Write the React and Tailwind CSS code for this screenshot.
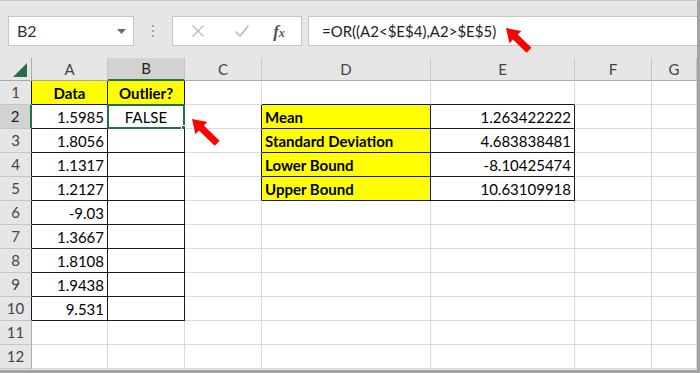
import React from 'react';

const colWidths = 'grid-cols-[32px_76px_77px_77px_169px_144px_77px_45px]';
const letters = ['A', 'B', 'C', 'D', 'E', 'F', 'G'];

// valores da planilha: [linha][coluna]
const cells = {
  '1-1': { v: 'Data', bold: true, align: 'center', yellow: true },
  '1-2': { v: 'Outlier?', bold: true, align: 'center', yellow: true },
  '2-1': { v: '1.5985' },
  '3-1': { v: '1.8056' },
  '4-1': { v: '1.1317' },
  '5-1': { v: '1.2127' },
  '6-1': { v: '-9.03' },
  '7-1': { v: '1.3667' },
  '8-1': { v: '1.8108' },
  '9-1': { v: '1.9438' },
  '10-1': { v: '9.531' },
  '2-2': { v: 'FALSE', align: 'center' },
  '2-4': { v: 'Mean', bold: true, align: 'left', yellow: true },
  '3-4': { v: 'Standard Deviation', bold: true, align: 'left', yellow: true },
  '4-4': { v: 'Lower Bound', bold: true, align: 'left', yellow: true },
  '5-4': { v: 'Upper Bound', bold: true, align: 'left', yellow: true },
  '2-5': { v: '1.263422222' },
  '3-5': { v: '4.683838481' },
  '4-5': { v: '-8.10425474' },
  '5-5': { v: '10.63109918' },
};

const bordered = (r, c) =>
  (r >= 1 && r <= 10 && c >= 1 && c <= 2) || (r >= 2 && r <= 5 && c >= 4 && c <= 5);

function Cell({ r, c }) {
  const cell = cells[`${r}-${c}`];
  const right = bordered(r, c) || bordered(r, c + 1) ? 'border-r-[#1a1a1a]' : 'border-r-[#dadada]';
  const bottom = bordered(r, c) || bordered(r + 1, c) ? 'border-b-[#1a1a1a]' : 'border-b-[#dadada]';
  const bg = cell?.yellow ? 'bg-[#ffff00]' : 'bg-white';
  const align =
    cell?.align === 'center' ? 'justify-center' : cell?.align === 'left' ? 'justify-start pl-[3px]' : 'justify-end pr-[3px]';
  const selected = r === 2 && c === 2;

  return (
    <div className={`relative h-[24px] border-r border-b ${right} ${bottom} ${bg} flex items-end pb-[1px] ${align}`}>
      {cell && (
        <span className={`text-[15px] leading-[20px] text-black whitespace-nowrap ${cell.bold ? 'font-bold' : ''}`}>
          {cell.v}
        </span>
      )}
      {selected && (
        <>
          <div className="absolute -left-px -top-px -right-px -bottom-px border-2 border-[#217346]" />
          <div className="absolute -right-[4px] -bottom-[4px] w-[7px] h-[7px] bg-[#217346] border border-white" />
        </>
      )}
    </div>
  );
}

export default function App() {
  const rows = Array.from({ length: 12 }, (_, i) => i + 1);

  return (
    <div className="relative w-[700px] h-[373px] bg-[#e6e6e6] border-t border-t-[#c8c8c8] border-r-[3px] border-b-[3px] border-r-[#a3a3a3] border-b-[#a3a3a3] overflow-hidden font-['Lato','Noto_Sans',sans-serif]">
      {/* Barra de fórmulas */}
      <div className="h-[57px] flex items-start pt-[15px] pl-[8px]">
        <div className="w-[126px] h-[30px] bg-white border border-[#c6c6c6] flex items-center justify-between pl-[8px] pr-[7px]">
          <span className="text-[16px] text-[#333]">B2</span>
          <svg width="9" height="5" viewBox="0 0 9 5">
            <path d="M0 0 H9 L4.5 5 Z" fill="#6b6b6b" />
          </svg>
        </div>
        <div className="w-[38px] h-[30px] flex flex-col items-center justify-center gap-[3px]">
          <span className="w-[2px] h-[2px] bg-[#a8a8a8]" />
          <span className="w-[2px] h-[2px] bg-[#a8a8a8]" />
          <span className="w-[2px] h-[2px] bg-[#a8a8a8]" />
        </div>
        <div className="w-[130px] h-[30px] bg-white border border-[#c6c6c6] flex items-center">
          <div className="w-[44px] flex justify-center pl-[6px]">
            <svg width="14" height="14" viewBox="0 0 14 14">
              <path d="M1.5 1.5 L12.5 12.5 M12.5 1.5 L1.5 12.5" stroke="#bcbcbc" strokeWidth="1.4" fill="none" />
            </svg>
          </div>
          <div className="w-[44px] flex justify-center pl-[6px]">
            <svg width="16" height="14" viewBox="0 0 16 14">
              <path d="M1.5 7.5 L6 12 L14.5 1.5" stroke="#bcbcbc" strokeWidth="1.6" fill="none" />
            </svg>
          </div>
          <div className="flex-1 flex justify-center pr-[4px]">
            <span className="font-['Liberation_Serif',serif] italic font-bold text-[17px] text-[#555] leading-none">
              f<span className="text-[12px]">x</span>
            </span>
          </div>
        </div>
        <div className="ml-[6px] flex-1 h-[30px] bg-white border-t border-b border-l border-[#c6c6c6] flex items-center pl-[13px]">
          <span className="text-[15px] text-[#222]">=OR((A2&lt;$E$4),A2&gt;$E$5)</span>
        </div>
      </div>

      {/* Planilha */}
      <div className={`grid ${colWidths}`}>
        <div className="relative h-[23px] bg-[#e6e6e6] border-r border-b border-[#ababab]">
          <svg className="absolute right-[4px] bottom-[3px]" width="14" height="14" viewBox="0 0 14 14">
            <path d="M14 0 V14 H0 Z" fill="#217346" />
          </svg>
        </div>
        {letters.map((l) => (
          <div
            key={l}
            className={`h-[23px] flex items-center justify-center text-[15px] border-r border-r-[#c6c6c6] ${
              l === 'B'
                ? 'bg-[#d2d2d2] border-b-2 border-b-[#217346] text-[#222]'
                : 'bg-[#e6e6e6] border-b border-b-[#ababab] text-[#444]'
            }`}
          >
            {l}
          </div>
        ))}

        {rows.map((r) => (
          <React.Fragment key={r}>
            <div
              className={`h-[24px] flex items-end justify-center pb-[1px] text-[15px] border-b border-b-[#c6c6c6] ${
                r === 2
                  ? 'bg-[#d2d2d2] border-r-2 border-r-[#217346] text-[#222]'
                  : r <= 10
                  ? 'bg-[#e6e6e6] border-r border-r-[#1a1a1a] text-[#444]'
                  : 'bg-[#e6e6e6] border-r border-r-[#ababab] text-[#444]'
              }`}
            >
              {r}
            </div>
            {letters.map((_, i) => (
              <Cell key={i} r={r} c={i + 1} />
            ))}
          </React.Fragment>
        ))}
      </div>

      {/* Setas vermelhas */}
      <svg className="absolute inset-0 pointer-events-none" width="700" height="373" viewBox="0 0 700 373">
        <g transform="translate(506 27) rotate(44)">
          <polygon points="0,0 13,-8.5 13,-3.5 32,-3.5 32,3.5 13,3.5 13,8.5" fill="#ff0000" />
        </g>
        <g transform="translate(192 118) rotate(44)">
          <polygon points="0,0 13,-8.5 13,-3.5 35,-3.5 35,3.5 13,3.5 13,8.5" fill="#ff0000" />
        </g>
      </svg>
    </div>
  );
}
